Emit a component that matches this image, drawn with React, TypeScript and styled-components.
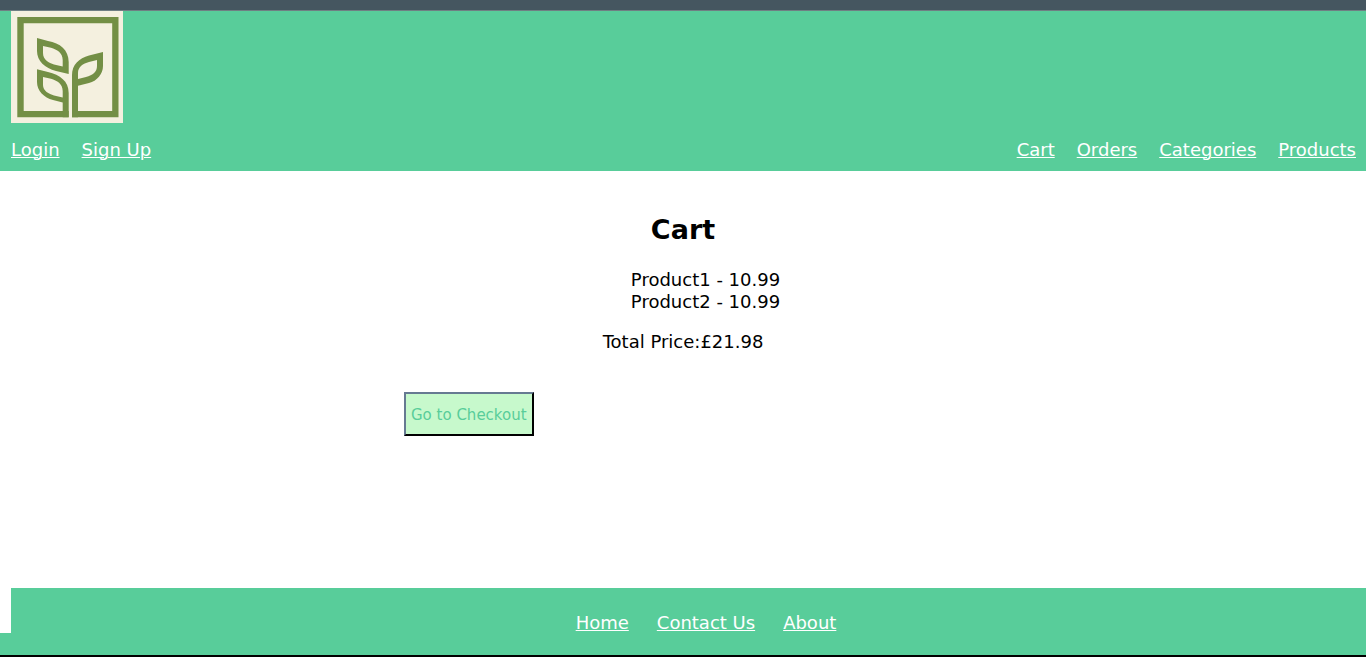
import React from "react";
import styled, { createGlobalStyle } from "styled-components";

const green = "#58cd9a";

const GlobalStyle = createGlobalStyle`
  * {
    box-sizing: border-box;
  }
  body {
    margin: 0;
    background: #fff;
    color: #000;
    font-family: Verdana, "DejaVu Sans", sans-serif;
    font-size: 18px;
    line-height: 22px;
  }
`;

const Page = styled.div`
  display: flex;
  flex-direction: column;
  min-height: 100vh;
  border-top: 10px solid #455660;
  border-bottom: 2px solid #000;
`;

const Header = styled.header`
  border-top: 1px solid #6f7f83;
  background: ${green};
  padding: 0 10px 10px 11px;
`;

const Logo = styled.svg`
  display: block;
  width: 112px;
  height: 112px;
`;

const NavBar = styled.nav`
  display: flex;
  justify-content: space-between;
  margin-top: 16px;
`;

const LinkList = styled.ul<{ $gap: number }>`
  display: flex;
  gap: ${({ $gap }) => $gap}px;
  margin: 0;
  padding: 0;
  list-style: none;
`;

const NavLink = styled.a`
  color: #fff;
  text-decoration: underline;
  text-decoration-thickness: 1px;
  text-underline-offset: 1px;
`;

const Main = styled.main`
  flex: 1;
  width: 100%;
  max-width: 558px;
  margin: 0 auto;
  padding: 42px 0;
  display: flex;
  flex-direction: column;
  align-items: center;
`;

const Title = styled.h1`
  margin: 0;
  font-size: 27px;
  line-height: 34px;
`;

const ProductList = styled.ul`
  margin: 22px 0 18px;
  padding: 0 0 0 45px;
  list-style: none;
`;

const Total = styled.p`
  margin: 0;
`;

const CheckoutButton = styled.button`
  align-self: flex-start;
  height: 44px;
  margin-top: 39px;
  padding: 2px 5px 0;
  border: 2px solid;
  border-color: #667a92 #000 #000 #667a92;
  background: #c7f9cc;
  color: ${green};
  font: inherit;
  font-size: 15px;
  white-space: nowrap;
`;

const Footer = styled.footer`
  border-bottom: 22px solid ${green};
`;

const FooterNav = styled.nav`
  display: flex;
  justify-content: center;
  height: 45px;
  margin-left: 11px;
  padding: 24px 0 0 35px;
  background: ${green};
`;

const products = [
  { name: "Product1", price: "10.99" },
  { name: "Product2", price: "10.99" },
];

function Links({ names, gap }: { names: string[]; gap: number }) {
  return (
    <LinkList $gap={gap}>
      {names.map((name) => (
        <li key={name}>
          <NavLink href="#">{name}</NavLink>
        </li>
      ))}
    </LinkList>
  );
}

function PlantLogo() {
  return (
    <Logo viewBox="0 0 112 112" role="img" aria-label="Plant logo">
      <rect width="112" height="112" fill="#f4f0df" />
      <g fill="#738f45" fillRule="evenodd">
        {/* frame, open between the two stems */}
        <path d="M6.300 6H107.500V106.300H61V100H101.200V12.200H12.700V100H57.700V106.300H6.300Z" />
        {/* upper left leaf */}
        <path d="M26 27L37 30C49 32 57.700 39 57.700 51V63L45 60C34 57 26 50 26 40ZM32 35V42C32 49 38 52 43 53.500L51.700 55.500V49C51.700 42 46 38.500 40 36.800Z" />
        {/* lower left leaf and its stem */}
        <path d="M26 58.300L37 61C49 64 57.700 70 57.700 82V106.300H51.700V91.500L42 89C33 86.500 26 80 26 71ZM32 66V74C32 80 38 83 43 84.500L51.700 86.500V80C51.700 73 46 69.500 40 67.800Z" />
        {/* right leaf and its stem */}
        <path d="M92 41L78 44.500C68 47 61 54 61 64V106.300H67V74.800L78 72C86 70 92 63 92 55ZM86 49V55C86 61 82 64 75 66L67 68V62C67 56 72 52.500 78 51Z" />
      </g>
    </Logo>
  );
}

export default function App() {
  return (
    <>
      <GlobalStyle />
      <Page>
        <Header>
          <PlantLogo />
          <NavBar>
            <Links names={["Login", "Sign Up"]} gap={22} />
            <Links names={["Cart", "Orders", "Categories", "Products"]} gap={22} />
          </NavBar>
        </Header>
        <Main>
          <Title>Cart</Title>
          <ProductList>
            {products.map(({ name, price }) => (
              <li key={name}>
                {name} - {price}
              </li>
            ))}
          </ProductList>
          <Total>Total Price:£21.98</Total>
          <CheckoutButton type="button">Go to Checkout</CheckoutButton>
        </Main>
        <Footer>
          <FooterNav>
            <Links names={["Home", "Contact Us", "About"]} gap={28} />
          </FooterNav>
        </Footer>
      </Page>
    </>
  );
}
